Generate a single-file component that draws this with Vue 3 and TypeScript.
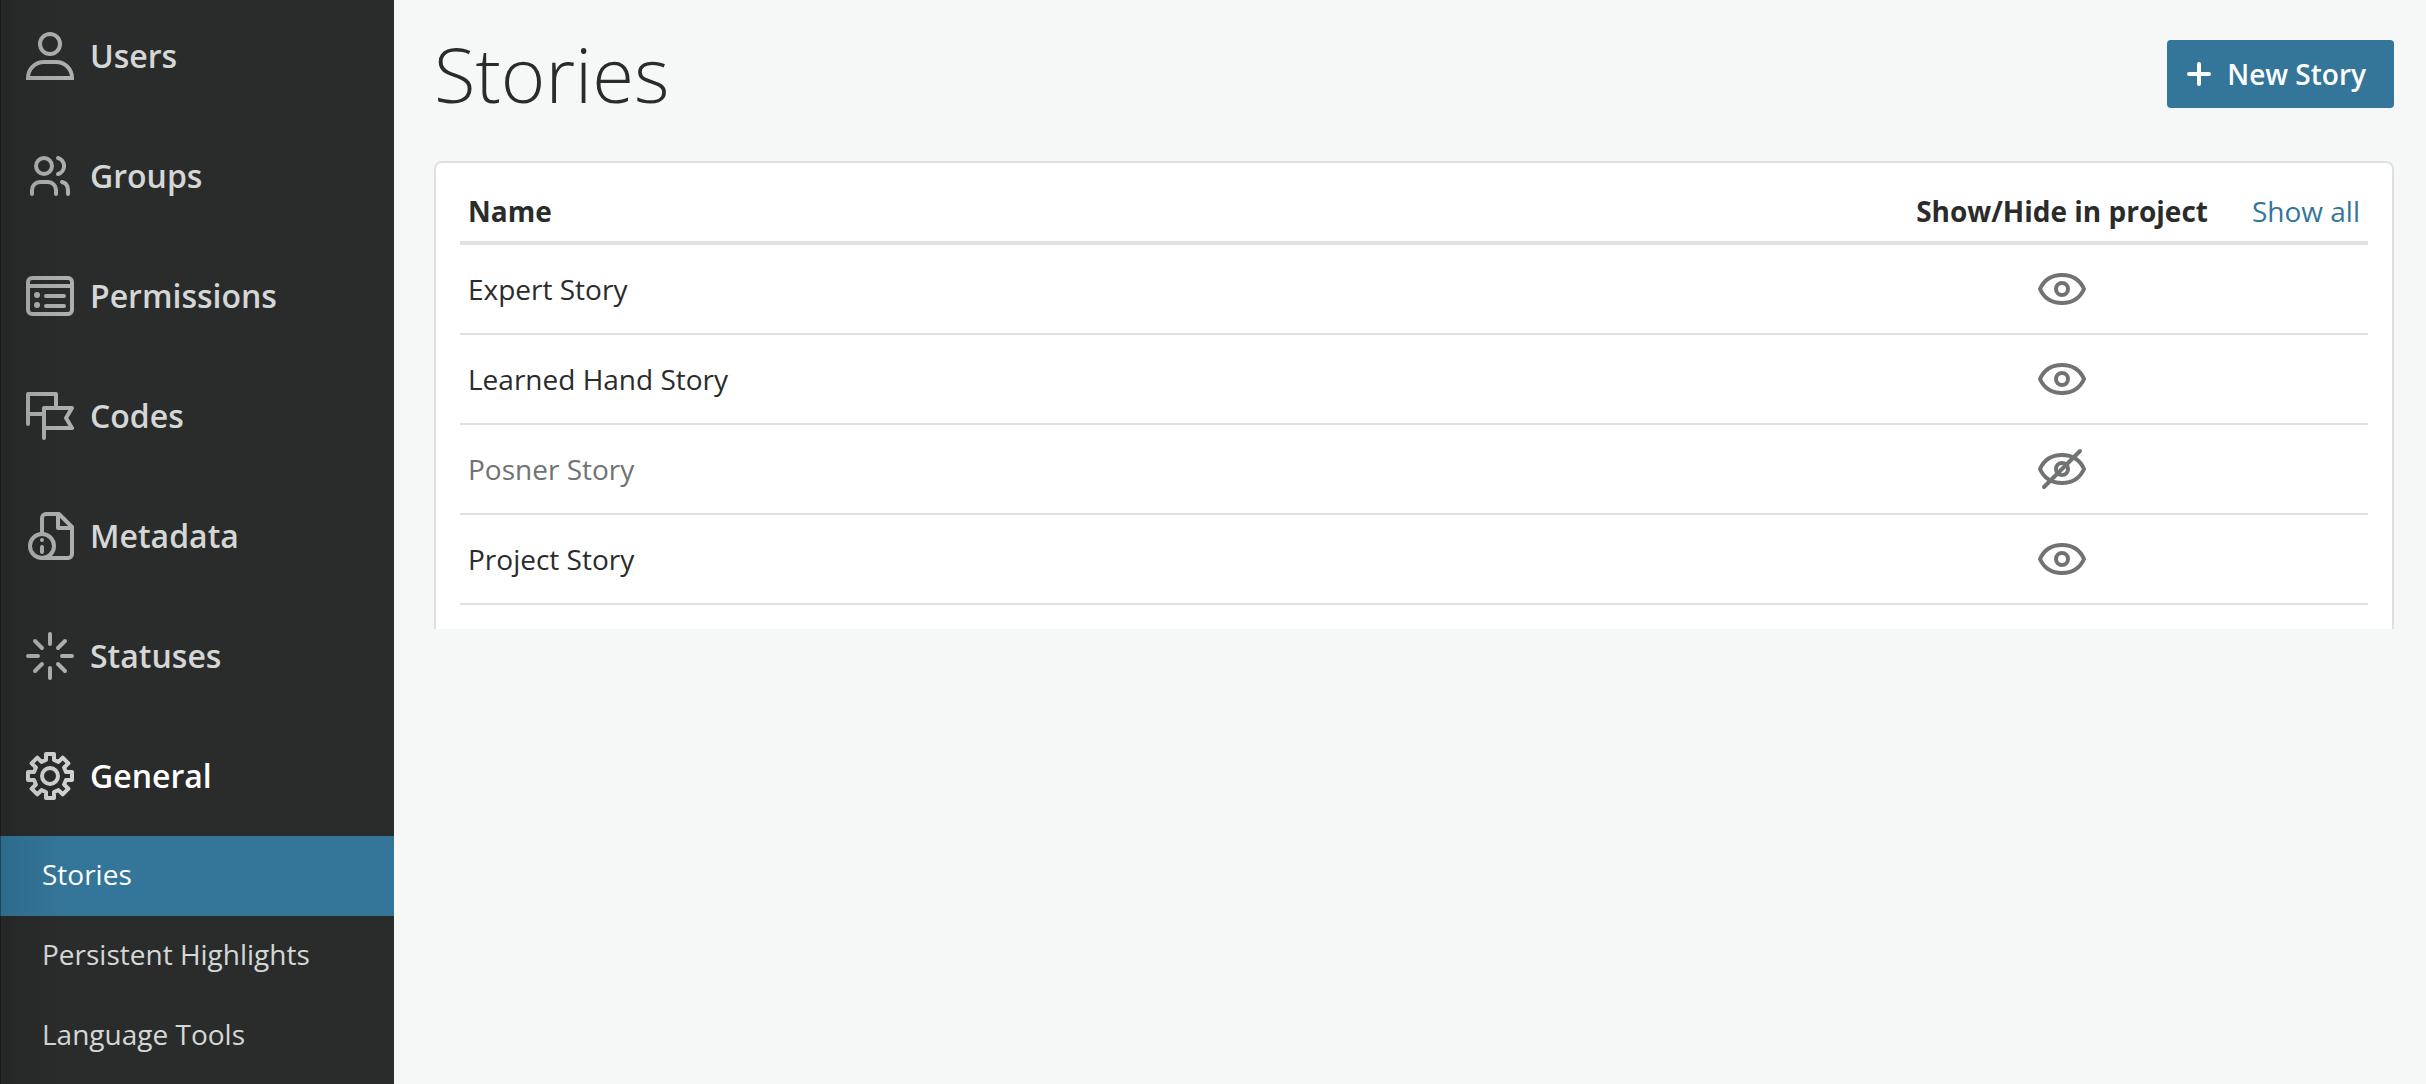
<script setup lang="ts">
import { computed, ref } from 'vue'

type IconName = 'users' | 'groups' | 'permissions' | 'codes' | 'metadata' | 'statuses' | 'general'

interface NavItem {
  label: string
  icon: IconName
  active?: boolean
}

interface Story {
  name: string
  visible: boolean
}

const navItems: NavItem[] = [
  { label: 'Users', icon: 'users' },
  { label: 'Groups', icon: 'groups' },
  { label: 'Permissions', icon: 'permissions' },
  { label: 'Codes', icon: 'codes' },
  { label: 'Metadata', icon: 'metadata' },
  { label: 'Statuses', icon: 'statuses' },
  { label: 'General', icon: 'general', active: true },
]

const subItems = ['Stories', 'Persistent Highlights', 'Language Tools']
const activeSub = ref('Stories')

const stories = ref<Story[]>([
  { name: 'Expert Story', visible: true },
  { name: 'Learned Hand Story', visible: true },
  { name: 'Posner Story', visible: false },
  { name: 'Project Story', visible: true },
])

function showAll() {
  stories.value.forEach((s) => (s.visible = true))
}

// Eight-toothed outline: one tooth profile repeated every 45 degrees.
const gearPath = computed(() => {
  const tooth = [[-4, -16], [-4, -22], [4, -22], [4, -16]]
  const points: string[] = []
  for (let i = 0; i < 8; i++) {
    const a = (i * Math.PI) / 4
    for (const [x, y] of tooth) {
      const px = 24 + x * Math.cos(a) - y * Math.sin(a)
      const py = 24 + x * Math.sin(a) + y * Math.cos(a)
      points.push(`${px.toFixed(1)} ${py.toFixed(1)}`)
    }
  }
  return `M${points.join('L')}Z`
})
</script>

<template>
  <div class="page">
    <aside class="sidebar">
      <nav class="nav" aria-label="Administration">
        <a v-for="item in navItems" :key="item.label" href="#" class="nav-item" :class="{ active: item.active }">
          <svg class="icon" viewBox="0 0 48 48" aria-hidden="true">
            <g v-if="item.icon === 'users'" class="sharp">
              <circle cx="24" cy="12" r="10" />
              <path d="M2 46C2 37 9 30 18 30H30C39 30 46 37 46 46Z" />
            </g>
            <g v-else-if="item.icon === 'groups'">
              <circle cx="18" cy="14" r="8" />
              <path d="M32 6A8.3 8.3 0 0 1 32 22M6 42V38A8 8 0 0 1 14 30H22A8 8 0 0 1 30 38V42M36 30C40 31 42 34 42 38V42" />
            </g>
            <g v-else-if="item.icon === 'permissions'">
              <rect x="2" y="6" width="44" height="36" rx="4" />
              <path d="M2 14H46M20 24H38M20 34H38" />
              <circle class="solid" cx="11" cy="23" r="3" />
              <circle class="solid" cx="11" cy="33" r="3" />
            </g>
            <path v-else-if="item.icon === 'codes'" d="M2 32V2H30V16M2 22H17M18 46V16H46L40 26L46 36H18" />
            <g v-else-if="item.icon === 'metadata'">
              <path d="M16 20V6A4 4 0 0 1 20 2H33L46 15V42A4 4 0 0 1 42 46H16M32 3V16H45" />
              <circle cx="16" cy="34" r="12" />
              <path d="M16 35V40" />
              <circle class="solid" cx="16" cy="28" r="2" />
            </g>
            <path
              v-else-if="item.icon === 'statuses'"
              d="M24 2V12M24 36V46M2 24H12M36 24H46M9 9L16 16M32 32L39 39M39 9L32 16M16 32L9 39"
            />
            <g v-else>
              <circle cx="24" cy="24" r="8" />
              <path :d="gearPath" />
            </g>
          </svg>
          <span>{{ item.label }}</span>
        </a>
        <a
          v-for="sub in subItems"
          :key="sub"
          href="#"
          class="sub-item"
          :class="{ selected: sub === activeSub }"
          @click.prevent="activeSub = sub"
        >{{ sub }}</a>
      </nav>
    </aside>

    <main class="main">
      <header class="header">
        <h1 class="title">Stories</h1>
        <button type="button" class="new-story">
          <svg class="plus" viewBox="0 0 24 24" aria-hidden="true"><path d="M12 2V22M2 12H22" /></svg>
          <span>New Story</span>
        </button>
      </header>

      <section class="card">
        <table class="stories">
          <thead>
            <tr>
              <th scope="col" class="name">Name</th>
              <th scope="col" class="toggle">Show/Hide in project</th>
              <td class="all"><a href="#" @click.prevent="showAll">Show all</a></td>
            </tr>
          </thead>
          <tbody>
            <tr v-for="story in stories" :key="story.name" :class="{ muted: !story.visible }">
              <td class="name">{{ story.name }}</td>
              <td class="toggle">
                <button
                  type="button"
                  class="eye"
                  :aria-label="(story.visible ? 'Hide ' : 'Show ') + story.name"
                  @click="story.visible = !story.visible"
                >
                  <svg class="icon" viewBox="0 0 48 48" aria-hidden="true">
                    <path d="M2 24C6 15 14 10 24 10S42 15 46 24C42 33 34 38 24 38S6 33 2 24Z" />
                    <circle cx="24" cy="24" r="6" />
                    <path v-if="!story.visible" d="M6 42L42 6" />
                  </svg>
                </button>
              </td>
              <td class="all"></td>
            </tr>
          </tbody>
        </table>
      </section>
    </main>
  </div>
</template>

<style>
body {
  margin: 0;
  background: #f5f8f7;
}
</style>

<style scoped>
.page {
  display: flex;
  min-height: 100vh;
  overflow: hidden;
  font-family: "Open Sans", "Noto Sans", sans-serif;
  font-size: 28px;
  line-height: 38px;
  color: #2a2c2b;
  background: #f5f8f7;
}

.sidebar {
  position: relative;
  flex: 0 0 394px;
  background: #2a2c2b;
}

/* Soft shadow along the left edge, drawn over the rows. */
.sidebar::after {
  content: "";
  position: absolute;
  inset: 0 auto 0 0;
  width: 64px;
  box-sizing: border-box;
  border-left: 1px solid rgba(0, 0, 0, 0.4);
  background: linear-gradient(to right, rgba(0, 0, 0, 0.1), rgba(0, 0, 0, 0));
  pointer-events: none;
}

.nav {
  display: flex;
  flex-direction: column;
  margin-top: -4px;
}

.nav-item {
  display: flex;
  align-items: center;
  gap: 16px;
  height: 120px;
  padding-left: 26px;
  font-size: 32px;
  font-weight: 600;
  line-height: 44px;
  color: #d5d7d6;
  text-decoration: none;
}

.nav-item .icon {
  color: #adafae;
}

.nav-item.active {
  color: #fff;
}

.nav-item.active .icon {
  color: #d0d2d1;
}

.icon {
  display: block;
  flex: none;
  width: 48px;
  height: 48px;
  fill: none;
  stroke: currentColor;
  stroke-width: 4;
  stroke-linecap: round;
  stroke-linejoin: round;
}

.icon .sharp {
  stroke-linejoin: miter;
}

.icon .solid {
  fill: currentColor;
  stroke: none;
}

.sub-item {
  display: flex;
  align-items: center;
  box-sizing: border-box;
  height: 80px;
  padding: 0 42px 4px;
  color: #d5d7d6;
  text-decoration: none;
}

.sub-item.selected {
  color: #fff;
  background: #347699;
}

.main {
  flex: 1;
  min-width: 0;
  padding: 40px 32px 40px 40px;
}

.header {
  display: flex;
  align-items: center;
  justify-content: space-between;
  margin-bottom: 53px;
}

.title {
  margin: 0;
  font-size: 76px;
  font-weight: 300;
  line-height: 68px;
}

.new-story {
  display: flex;
  align-items: center;
  gap: 16px;
  height: 68px;
  padding: 0 28px 0 20px;
  border: 0;
  border-radius: 4px;
  font: inherit;
  font-weight: 600;
  color: #fff;
  background: #347699;
  cursor: pointer;
}

.plus {
  width: 24px;
  height: 24px;
  fill: none;
  stroke: currentColor;
  stroke-width: 4;
  stroke-linecap: round;
}

.card {
  padding: 24px;
  border: 2px solid #dfe1e1;
  border-bottom: 0;
  border-radius: 8px 8px 0 0;
  background: #fff;
}

.stories {
  width: 100%;
  border-collapse: separate;
  border-spacing: 0;
}

.stories th,
.stories td {
  padding: 0 8px;
  text-align: left;
}

.stories thead th,
.stories thead td {
  padding-top: 5px;
  padding-bottom: 11px;
  border-bottom: 4px solid #dfe1e3;
}

.stories th {
  font-weight: 700;
}

.stories tbody td {
  height: 88px;
  border-bottom: 2px solid #dfe1e1;
}

.stories .toggle {
  width: 1px;
  padding-left: 22px;
  padding-right: 22px;
  text-align: center;
  white-space: nowrap;
}

.stories .all {
  width: 1px;
  padding-left: 22px;
  white-space: nowrap;
}

.all a {
  color: #347699;
  text-decoration: none;
}

.muted .name {
  color: #707273;
}

.eye {
  display: block;
  margin: 0 auto;
  padding: 0;
  border: 0;
  color: #707273;
  background: none;
  cursor: pointer;
}
</style>
